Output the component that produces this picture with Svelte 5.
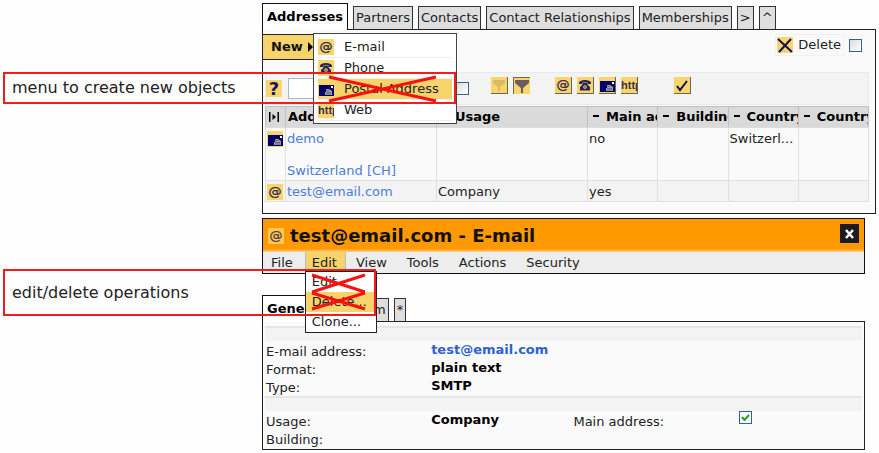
<script lang="ts">
  type IconName = 'at' | 'phone' | 'mail' | 'http';

  const tabs = ['Addresses', 'Partners', 'Contacts', 'Contact Relationships', 'Memberships', '>', '^'];
  const detailTabs = ['General', 'System', '*'];

  const createItems: { icon: IconName; label: string; active?: boolean }[] = [
    { icon: 'at', label: 'E-mail' },
    { icon: 'phone', label: 'Phone' },
    { icon: 'mail', label: 'Postal Address', active: true },
    { icon: 'http', label: 'Web' }
  ];

  const typeFilters: IconName[] = ['at', 'phone', 'mail', 'http'];

  const columns = ['Address', 'Usage', 'Main address', 'Building', 'Country', 'Country'];
  const rows: { icon: IconName; address: string[]; cells: string[] }[] = [
    { icon: 'mail', address: ['demo', '', 'Switzerland [CH]'], cells: ['', 'no', '', 'Switzerl...', ''] },
    { icon: 'at', address: ['test@email.com'], cells: ['Company', 'yes', '', '', ''] }
  ];

  const menus = ['File', 'Edit', 'View', 'Tools', 'Actions', 'Security'];
  const editItems = ['Edit', 'Delete...', 'Clone...'];

  let query = $state('');
  let filterOn = $state(false);
  let deleteOn = $state(false);
  let mainAddress = $state(true);
</script>

{#snippet tile(name: IconName)}
  <svg class="tile" viewBox="0 0 16 16" aria-hidden="true">
    <rect width="16" height="16" fill="#f9d56e" />
    {#if name === 'at'}
      <text x="8" y="12" text-anchor="middle" font-size="13" fill="#2a2450" stroke="#2a2450" stroke-width="0.300">@</text>
    {:else if name === 'phone'}
      <path d="M2 7V5.5Q3 3 8 3t6 2.500V7h-3.500V5.500h-5V7z" fill="#2a2458" />
      <path d="M6 6h4l1 2 2 2v3.500H3V10l2-2z" fill="#2a2458" />
      <circle cx="8" cy="10" r="1.800" fill="#f9d56e" />
      <circle cx="8" cy="10" r="0.800" fill="#2a2458" />
    {:else if name === 'mail'}
      <path d="M1 4h15v11H1z" fill="#00006c" />
      <path d="M8 8h3l3 2v4H7v-3h1z" fill="#a89c94" />
      <path d="M8 11.500h5M8 13h5M8 9.500h3" stroke="#45456c" stroke-width="0.600" />
      <rect x="13" y="5" width="2" height="2" fill="#fff" />
    {:else}
      <text x="0" y="12" font-size="11" font-weight="bold" class="http" fill="#3a2f4a">http</text>
    {/if}
  </svg>
{/snippet}

<div class="page">
  <main>
    <section class="list">
      <div class="tabs" role="tablist">
        {#each tabs as tab, i (tab)}
          <button class="tab" class:current={i === 0} role="tab" aria-selected={i === 0}>{tab}</button>
        {/each}
      </div>

      <div class="panel">
        <div class="actions">
          <div class="new-wrap">
            <button class="new">
              New
              <svg width="5" height="10" viewBox="0 0 5 10" aria-hidden="true"><path d="M0 0l5 5-5 5z" /></svg>
            </button>
            <div class="create-menu" role="menu">
              {#each createItems as item (item.label)}
                <button class="create-item" class:active={item.active} role="menuitem">
                  {@render tile(item.icon)}
                  <span>{item.label}</span>
                </button>
              {/each}
            </div>
          </div>
          <div class="delete">
            <button class="delete-btn">
              <svg class="tile" viewBox="0 0 16 16" aria-hidden="true">
                <rect width="16" height="16" fill="#f9d56e" />
                <path d="M1 2l14 13M14 2L2 15" stroke="#10104c" stroke-width="2" />
              </svg>
              Delete
            </button>
            <input type="checkbox" aria-label="Confirm delete" bind:checked={deleteOn} />
          </div>
        </div>

        <div class="filter">
          <button class="help" aria-label="Help">?</button>
          <input class="query" type="text" aria-label="Filter" bind:value={query} />
          <input type="checkbox" aria-label="Apply filter" bind:checked={filterOn} />
          <div class="group">
            <button class="tool" aria-label="Add filter">
              <svg class="tile" viewBox="0 0 16 16" aria-hidden="true">
                <rect width="16" height="16" fill="#f9d56e" />
                <path d="M2 3h12v3l-5 4v4H7v-4L2 6z" fill="#d9b963" />
              </svg>
            </button>
            <button class="tool pressed" aria-label="Set filter">
              <svg class="tile" viewBox="0 0 16 16" aria-hidden="true">
                <rect width="16" height="16" fill="#f9d56e" />
                <path d="M1 2h14v3L9 10v5H7v-5L1 5z" fill="#6a5a66" />
              </svg>
            </button>
          </div>
          <div class="group">
            {#each typeFilters as name (name)}
              <button class="tool" aria-label={name}>{@render tile(name)}</button>
            {/each}
          </div>
          <div class="group">
            <button class="tool" aria-label="Apply">
              <svg class="tile" viewBox="0 0 16 16" aria-hidden="true">
                <rect width="16" height="16" fill="#f9d56e" />
                <path d="M3 9l3 4 7-9" fill="none" stroke="#10104c" stroke-width="2" />
              </svg>
            </button>
          </div>
        </div>

        <table>
          <colgroup>
            <col class="c-icon" /><col class="c-wide" /><col class="c-wide" />
            <col /><col /><col /><col />
          </colgroup>
          <thead>
            <tr>
              <th>
                <svg class="expand" width="12" height="12" viewBox="0 0 12 12" aria-hidden="true">
                  <path d="M1 1h1.500v10H1zM9.500 1H11v10H9.500zM4.500 3L8 6 4.500 9z" />
                </svg>
              </th>
              {#each columns as col, i (i)}
                <th>{#if i > 0}<span class="dash"></span>{/if}{col}</th>
              {/each}
            </tr>
          </thead>
          <tbody>
            {#each rows as row (row.icon)}
              <tr>
                <td class="icon">{@render tile(row.icon)}</td>
                <td>
                  {#each row.address as line, i (i)}
                    <a href="#address">{line}</a>
                  {/each}
                </td>
                {#each row.cells as cell, i (i)}
                  <td>{cell}</td>
                {/each}
              </tr>
            {/each}
          </tbody>
        </table>
      </div>
    </section>

    <section class="detail">
      <div class="window">
        <header>
          {@render tile('at')}
          <h1>test@email.com - E-mail</h1>
          <button class="close" aria-label="Close">
            <svg width="11" height="10" viewBox="0 0 11 10" aria-hidden="true">
              <path d="M2 1l7 8M9 1L2 9" stroke="#fff" stroke-width="2.500" />
            </svg>
          </button>
        </header>
        <nav>
          {#each menus as menu (menu)}
            <div class="menu-wrap">
              <button class="menu" class:open={menu === 'Edit'}>{menu}</button>
              {#if menu === 'Edit'}
                <div class="dropdown" role="menu">
                  {#each editItems as item, i (item)}
                    <button class="drop-item" class:active={i === 1} role="menuitem">{item}</button>
                  {/each}
                </div>
              {/if}
            </div>
          {/each}
        </nav>
      </div>

      <div class="tabs" role="tablist">
        {#each detailTabs as tab, i (tab)}
          <button class="tab" class:current={i === 0} role="tab" aria-selected={i === 0}>{tab}</button>
        {/each}
      </div>

      <div class="panel fields">
        <div class="strip"></div>
        <div class="row"><span>E-mail address:</span><b><a href="#mail">test@email.com</a></b></div>
        <div class="row"><span>Format:</span><b>plain text</b></div>
        <div class="row"><span>Type:</span><b>SMTP</b></div>
        <div class="strip"></div>
        <div class="row">
          <span>Usage:</span><b>Company</b>
          <label for="main-address">Main address:</label>
          <input id="main-address" type="checkbox" bind:checked={mainAddress} />
        </div>
        <div class="row"><span>Building:</span></div>
      </div>
    </section>
  </main>

  <div class="callout create">menu to create new objects</div>
  <svg class="cross create-cross" width="110" height="28" viewBox="0 0 110 28" aria-hidden="true">
    <path d="M1 2l107 24M1 26L108 2" />
  </svg>
  <div class="callout edit">edit/delete operations</div>
  <svg class="cross edit-cross" width="56" height="38" viewBox="0 0 56 38" aria-hidden="true">
    <path d="M1 2l53 17M1 19L54 2M1 20l53 16M1 36l53-16" />
  </svg>
</div>

<style>
  :global(body) {
    margin: 0;
    background: #fefefe;
  }

  .page {
    position: relative;
    padding: 3px 3px 2px 262px;
    font: 13px/16px "DejaVu Sans", Verdana, sans-serif;
    color: #222;
  }
  .page :global(*) { box-sizing: border-box; }

  button {
    margin: 0;
    padding: 0;
    border: 0;
    background: none;
    font: inherit;
    color: inherit;
  }
  a {
    color: #4f7bd9;
    text-decoration: none;
  }
  .tile {
    display: block;
    flex: none;
    width: 16px;
    height: 16px;
    overflow: hidden;
  }
  .http { font-family: "Liberation Sans", Arial, sans-serif; }

  input[type="checkbox"] {
    appearance: none;
    flex: none;
    width: 13px;
    height: 13px;
    margin: 0;
    border: 1px solid #33648f;
    background: linear-gradient(135deg, #dcdcd7, #fff);
  }
  input[type="checkbox"]:checked {
    background: #fff url("data:image/svg+xml,%3Csvg xmlns='http://www.w3.org/2000/svg' viewBox='0 0 11 11'%3E%3Cpath d='M2 5l2.500 3L9 3' fill='none' stroke='%2321a121' stroke-width='2'/%3E%3C/svg%3E");
  }

  .tabs {
    display: flex;
    align-items: flex-end;
    gap: 5px;
  }
  .tab {
    height: 23px;
    padding: 0 2px;
    border: 1px solid #333;
    border-bottom: 0;
    background: #dedede;
    white-space: nowrap;
  }
  .tab.current {
    position: relative;
    height: 27px;
    margin-bottom: -1px;
    padding: 0 4px;
    border-color: #111;
    background: #fff;
    font-weight: bold;
    color: #000;
  }

  .panel {
    border: 1px solid #222;
    background: #fafafa;
  }
  .list .panel { padding: 4px 6px 11px 2px; }

  .actions {
    display: flex;
    justify-content: space-between;
    align-items: flex-start;
    height: 38px;
  }
  .new-wrap {
    position: relative;
    margin-left: -3px;
  }
  .new {
    display: flex;
    align-items: center;
    gap: 5px;
    width: 52px;
    height: 26px;
    padding-left: 8px;
    border: 1px solid #222;
    background: #f7d36b;
    font-weight: bold;
    color: #111;
  }
  .create-menu {
    position: absolute;
    z-index: 2;
    top: -1px;
    left: 51px;
    width: 144px;
    padding: 3px 4px 2px;
    border: 1px solid #444;
    background: #fff;
  }
  .create-item {
    display: flex;
    align-items: center;
    gap: 10px;
    width: 100%;
    height: 21px;
    border-bottom: 1px solid #eee;
    white-space: nowrap;
  }
  .create-item.active { background: #f7d36b; }

  .delete {
    display: flex;
    align-items: center;
    gap: 5px;
    margin: 0 7px 0 0;
  }
  .delete-btn {
    display: flex;
    align-items: center;
    gap: 5px;
    height: 22px;
    padding: 0 2px 0 1px;
    border: 1px solid #f1f1f1;
  }

  .filter {
    display: flex;
    align-items: center;
    height: 33px;
    border: 1px solid #e9e9e9;
    background: #f3f3f3;
  }
  .help {
    width: 16px;
    height: 17px;
    background: #f9d56e;
    font-size: 18px;
    font-weight: bold;
    color: #15155c;
  }
  .query {
    width: 162px;
    height: 21px;
    margin: 0 6px;
    border: 1px solid #a5b8cc;
    background: #fff;
  }
  .group {
    display: flex;
    align-self: flex-start;
    gap: 5px;
    margin: 4px 0 0 22px;
  }
  .group + .group { margin-left: 25px; }
  .group:last-child { margin-left: 36px; }
  .tool {
    border: solid #6b6558;
    border-width: 0 1px 1px 0;
  }
  .tool.pressed { border-width: 1px 0 0 1px; }

  table {
    width: 100%;
    margin-top: 1px;
    border-collapse: collapse;
    table-layout: fixed;
  }
  .c-icon { width: 20px; }
  .c-wide { width: 151px; }
  th {
    height: 21px;
    padding: 0 0 0 2px;
    border: 1px solid #c0c0c0;
    border-bottom-color: #ddd;
    background: #dadada;
    overflow: hidden;
    text-align: left;
    white-space: nowrap;
    color: #000;
  }
  .expand { display: block; }
  .dash {
    display: inline-block;
    width: 6px;
    height: 2px;
    margin: 0 7px 4px 3px;
    background: #000;
  }
  td {
    padding: 3px 0 1px 1px;
    border: 1px solid #e0e0e0;
    vertical-align: top;
    white-space: nowrap;
  }
  td.icon { padding: 3px 0 0 1px; }
  tbody tr:nth-child(2) { background: #f3f3f3; }
  td a {
    display: block;
    min-height: 16px;
  }

  .detail {
    margin: 4px 11px 0 0;
  }
  .window {
    border: 1px solid #111;
    background: #ededed;
  }
  header {
    display: flex;
    align-items: center;
    height: 33px;
    padding: 0 5px;
    background: linear-gradient(#ff9900 30px, #f5cf94);
  }
  header .tile { opacity: 0.8; }
  h1 {
    flex: 1;
    margin: 0 0 0 6px;
    font-size: 18px;
    line-height: 24px;
    color: #111;
  }
  .close {
    display: grid;
    place-items: center;
    width: 19px;
    height: 19px;
    margin-bottom: 4px;
    background: #1c1c1c;
  }
  nav {
    display: flex;
    height: 21px;
    padding-left: 2px;
  }
  .menu-wrap {
    position: relative;
  }
  .menu {
    height: 21px;
    padding: 1px 10px 0;
  }
  .menu-wrap:first-child .menu { padding-left: 6px; }
  .menu.open {
    padding: 1px 8px 0 6px;
    border: solid #bbb;
    border-width: 0 1px;
    background: #f7d36b;
  }
  .menu-wrap:first-child { margin-right: 2px; }
  .dropdown {
    position: absolute;
    z-index: 2;
    top: 19px;
    left: 0;
    width: 72px;
    border: 1px solid #222;
    background: #fff;
  }
  .drop-item {
    display: block;
    width: 100%;
    height: 20px;
    padding-left: 6px;
    text-align: left;
  }
  .drop-item.active { background: #f7d36b; }

  .detail .tabs { margin-top: 21px; }
  .fields { padding: 4px 2px 2px; }
  .strip {
    height: 15px;
    border-top: 2px solid #e6e6e6;
    background: #f3f3f3;
  }
  .row + .strip { margin-top: 1px; }
  .row {
    display: grid;
    grid-template-columns: 166fr 143fr 166fr 124fr;
    height: 18px;
    padding-left: 1px;
    line-height: 22px;
  }
  .row b {
    line-height: 18px;
    color: #000;
  }
  .row b a { color: #2e62cf; }

  .callout {
    position: absolute;
    z-index: 3;
    left: 3px;
    display: flex;
    align-items: center;
    padding-left: 7px;
    border: 2px solid #f21c1c;
    font-size: 16px;
    color: #222;
    pointer-events: none;
  }
  .callout.create {
    top: 72px;
    width: 453px;
    height: 32px;
  }
  .callout.edit {
    top: 269px;
    width: 373px;
    height: 47px;
  }
  .cross {
    position: absolute;
    z-index: 3;
    fill: none;
    stroke: #f81111;
    stroke-width: 3;
    pointer-events: none;
  }
  .create-cross {
    top: 75px;
    left: 328px;
  }
  .edit-cross {
    top: 273px;
    left: 311px;
  }
</style>
